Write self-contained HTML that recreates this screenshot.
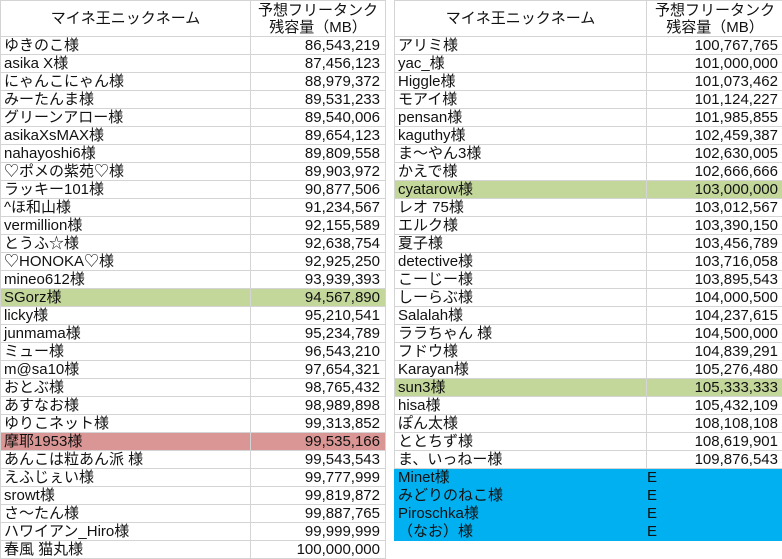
<!DOCTYPE html><html><head><meta charset="utf-8"><style>
body{margin:0;width:782px;height:559px;background:#fff;overflow:hidden;font-family:"Liberation Sans","Noto Sans CJK JP",sans-serif;color:#111}
table{position:absolute;top:0;border-collapse:collapse;table-layout:fixed}
td{height:17px;border:1px solid #d4d4d4;padding:0 3px;font-size:15px;line-height:17px;white-space:nowrap;overflow:hidden}
td.n{text-align:right;padding-right:5px}
tr.h td{height:35px;text-align:center;font-size:15px;line-height:17px}
.g td{background:#c4d79b}.p td{background:#da9694}
.b td{background:#00b0f0;border-color:#00b0f0}
.b td.e{padding-left:0}
</style></head><body>
<table style="left:0;width:386px"><colgroup><col style="width:250px"><col></colgroup>
<tr class="h"><td>マイネ王ニックネーム</td><td>予想フリータンク<br>残容量（MB）</td></tr>
<tr><td>ゆきのこ様</td><td class="n">86,543,219</td></tr>
<tr><td>asika X様</td><td class="n">87,456,123</td></tr>
<tr><td>にゃんこにゃん様</td><td class="n">88,979,372</td></tr>
<tr><td>みーたんま様</td><td class="n">89,531,233</td></tr>
<tr><td>グリーンアロー様</td><td class="n">89,540,006</td></tr>
<tr><td>asikaXsMAX様</td><td class="n">89,654,123</td></tr>
<tr><td>nahayoshi6様</td><td class="n">89,809,558</td></tr>
<tr><td>♡ポメの紫苑♡様</td><td class="n">89,903,972</td></tr>
<tr><td>ラッキー101様</td><td class="n">90,877,506</td></tr>
<tr><td>^ほ和山様</td><td class="n">91,234,567</td></tr>
<tr><td>vermillion様</td><td class="n">92,155,589</td></tr>
<tr><td>とうふ☆様</td><td class="n">92,638,754</td></tr>
<tr><td>♡HONOKA♡様</td><td class="n">92,925,250</td></tr>
<tr><td>mineo612様</td><td class="n">93,939,393</td></tr>
<tr class="g"><td>SGorz様</td><td class="n">94,567,890</td></tr>
<tr><td>licky様</td><td class="n">95,210,541</td></tr>
<tr><td>junmama様</td><td class="n">95,234,789</td></tr>
<tr><td>ミュー様</td><td class="n">96,543,210</td></tr>
<tr><td>m@sa10様</td><td class="n">97,654,321</td></tr>
<tr><td>おとぶ様</td><td class="n">98,765,432</td></tr>
<tr><td>あすなお様</td><td class="n">98,989,898</td></tr>
<tr><td>ゆりこネット様</td><td class="n">99,313,852</td></tr>
<tr class="p"><td>摩耶1953様</td><td class="n">99,535,166</td></tr>
<tr><td>あんこは粒あん派 様</td><td class="n">99,543,543</td></tr>
<tr><td>えふじぇい様</td><td class="n">99,777,999</td></tr>
<tr><td>srowt様</td><td class="n">99,819,872</td></tr>
<tr><td>さ～たん様</td><td class="n">99,887,765</td></tr>
<tr><td>ハワイアン_Hiro様</td><td class="n">99,999,999</td></tr>
<tr><td>春風 猫丸様</td><td class="n">100,000,000</td></tr>
</table>
<table style="left:394px;width:390px"><colgroup><col style="width:252px"><col></colgroup>
<tr class="h"><td>マイネ王ニックネーム</td><td>予想フリータンク<br>残容量（MB）</td></tr>
<tr><td>アリミ様</td><td class="n">100,767,765</td></tr>
<tr><td>yac_様</td><td class="n">101,000,000</td></tr>
<tr><td>Higgle様</td><td class="n">101,073,462</td></tr>
<tr><td>モアイ様</td><td class="n">101,124,227</td></tr>
<tr><td>pensan様</td><td class="n">101,985,855</td></tr>
<tr><td>kaguthy様</td><td class="n">102,459,387</td></tr>
<tr><td>ま～やん3様</td><td class="n">102,630,005</td></tr>
<tr><td>かえで様</td><td class="n">102,666,666</td></tr>
<tr class="g"><td>cyatarow様</td><td class="n">103,000,000</td></tr>
<tr><td>レオ 75様</td><td class="n">103,012,567</td></tr>
<tr><td>エルク様</td><td class="n">103,390,150</td></tr>
<tr><td>夏子様</td><td class="n">103,456,789</td></tr>
<tr><td>detective様</td><td class="n">103,716,058</td></tr>
<tr><td>こーじー様</td><td class="n">103,895,543</td></tr>
<tr><td>しーらぶ様</td><td class="n">104,000,500</td></tr>
<tr><td>Salalah様</td><td class="n">104,237,615</td></tr>
<tr><td>ララちゃん 様</td><td class="n">104,500,000</td></tr>
<tr><td>フドウ様</td><td class="n">104,839,291</td></tr>
<tr><td>Karayan様</td><td class="n">105,276,480</td></tr>
<tr class="g"><td>sun3様</td><td class="n">105,333,333</td></tr>
<tr><td>hisa様</td><td class="n">105,432,109</td></tr>
<tr><td>ぽん太様</td><td class="n">108,108,108</td></tr>
<tr><td>ととちず様</td><td class="n">108,619,901</td></tr>
<tr><td>ま、いっねー様</td><td class="n">109,876,543</td></tr>
<tr class="b"><td>Minet様</td><td class="e">E</td></tr>
<tr class="b"><td>みどりのねこ様</td><td class="e">E</td></tr>
<tr class="b"><td>Piroschka様</td><td class="e">E</td></tr>
<tr class="b"><td>（なお）様</td><td class="e">E</td></tr>
</table>
</body></html>
